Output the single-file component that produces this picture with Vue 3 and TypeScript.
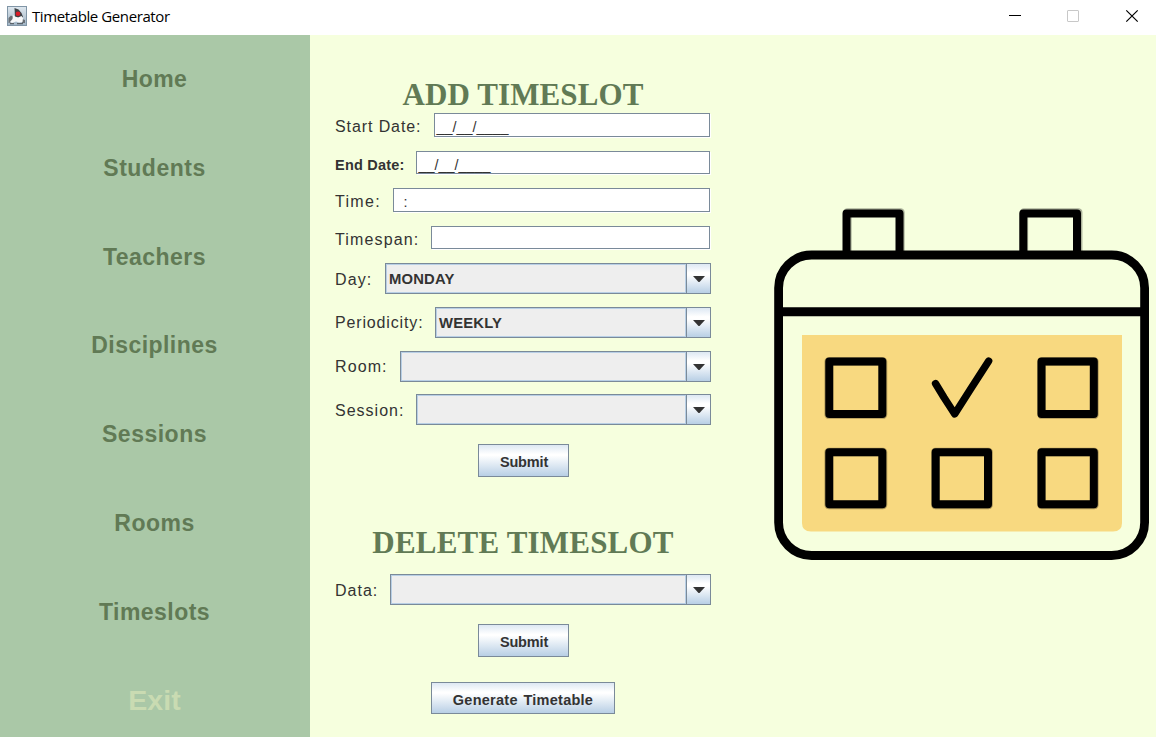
<script setup lang="ts">
interface NavItem { label: string; spacing: number; exit?: boolean }
interface Field {
  label: string
  labelWidth: number
  kind: 'text' | 'combo'
  value: string
  top: number
  height: number
  spacing: number
  bold?: boolean
  low?: boolean
  high?: boolean
}

const nav: NavItem[] = [
  { label: 'Home', spacing: 0.4 },
  { label: 'Students', spacing: 0.5 },
  { label: 'Teachers', spacing: 0.45 },
  { label: 'Disciplines', spacing: 0.45 },
  { label: 'Sessions', spacing: 0.5 },
  { label: 'Rooms', spacing: 0.5 },
  { label: 'Timeslots', spacing: 0.45 },
  { label: 'Exit', spacing: 0, exit: true },
]

const fields: Field[] = [
  { label: 'Start Date:', labelWidth: 99, kind: 'text', value: '__/__/____', top: 0, height: 24, spacing: 0.9 },
  { label: 'End Date:', labelWidth: 81, kind: 'text', value: '__/__/____', top: 14, height: 23, spacing: 0.22, bold: true, low: true },
  { label: 'Time:', labelWidth: 58, kind: 'text', value: '  :', top: 14, height: 24, spacing: 1.3 },
  { label: 'Timespan:', labelWidth: 96, kind: 'text', value: '', top: 14, height: 23, spacing: 1.15, low: true },
  { label: 'Day:', labelWidth: 50, kind: 'combo', value: 'MONDAY', top: 14, height: 31, spacing: 1.1 },
  { label: 'Periodicity:', labelWidth: 100, kind: 'combo', value: 'WEEKLY', top: 13, height: 31, spacing: 0.85, high: true },
  { label: 'Room:', labelWidth: 65, kind: 'combo', value: '', top: 13, height: 31, spacing: 1.1, high: true },
  { label: 'Session:', labelWidth: 81, kind: 'combo', value: '', top: 12, height: 31, spacing: 1 },
]

const deleteFields: Field[] = [
  { label: 'Data:', labelWidth: 55, kind: 'combo', value: '', top: 0, height: 31, spacing: 1 },
]

const groups = [
  { title: 'ADD TIMESLOT', cls: 'add', fields },
  { title: 'DELETE TIMESLOT', cls: 'delete', fields: deleteFields },
]
</script>

<template>
  <div class="window">
    <header class="titlebar">
      <svg class="app-icon" width="20" height="20" viewBox="0 0 20 20">
        <defs>
          <linearGradient id="tile" x1="0" y1="0" x2="0" y2="1">
            <stop offset="0" stop-color="#dfe8ef" />
            <stop offset="1" stop-color="#9fb3c4" />
          </linearGradient>
        </defs>
        <rect x=".5" y=".5" width="19" height="19" fill="url(#tile)" stroke="#8095a6" />
        <path d="M1.500 12 4 9.500 6.500 11 6 16 1.500 17Z" fill="#6a7076" />
        <path d="M15 13l3 1v3h-3Z" fill="#6a7076" />
        <path d="M7.500 2l4 1.500 3 3.500 1.500 4-2 1.500-6-1.500Z" fill="#3f4246" />
        <path d="M6 9l2 1.500 3 1 3.500-1.500 1.500 2-.5 4-3.500.5-3-1-4 1.500-2-1 2.500-3Z" fill="#f7f8f9" />
        <path d="M3 17h4v1.200H3ZM10 17h6v1.200h-6Z" fill="#5a6269" />
        <circle cx="11" cy="7.800" r="2.300" fill="#dc1c28" />
      </svg>
      <span class="title">Timetable Generator</span>
      <div class="controls">
        <svg width="176" height="35" viewBox="0 0 176 35" fill="none">
          <path d="M29 15.500H41" stroke="#000" />
          <rect x="87.500" y="10.500" width="11" height="11" rx=".5" stroke="#c8c8c8" />
          <path d="M146.300 10.300 157.700 21.700M157.700 10.300 146.300 21.700" stroke="#000" stroke-width="1.200" />
        </svg>
      </div>
    </header>

    <div class="body">
      <nav class="sidebar">
        <a v-for="n in nav" :key="n.label" class="nav-item" :class="{ exit: n.exit }">
          <span :style="{ letterSpacing: n.spacing + 'px' }">{{ n.label }}</span>
        </a>
      </nav>

      <main class="form">
        <section v-for="g in groups" :key="g.title" :class="g.cls">
          <h1>{{ g.title }}</h1>
          <div
            v-for="f in g.fields"
            :key="f.label"
            class="row"
            :style="{ marginTop: f.top + 'px', height: f.height + 'px' }"
          >
            <label
              :class="{ bold: f.bold, low: f.low, high: f.high }"
              :style="{ width: f.labelWidth + 'px', letterSpacing: f.spacing + 'px' }"
            >{{ f.label }}</label>
            <div v-if="f.kind === 'text'" class="input">{{ f.value }}</div>
            <div v-else class="combo">
              <div class="combo-value">{{ f.value }}</div>
              <div class="combo-arrow">
                <svg width="12" height="6" viewBox="0 0 12 6"><path d="M0 0H12L6.500 6H5.500Z" fill="#333" /></svg>
              </div>
            </div>
          </div>
          <button class="submit">Submit</button>
        </section>
        <button class="generate">Generate Timetable</button>
      </main>

      <aside class="art">
        <svg width="396" height="390" viewBox="760 190 396 390" fill="none" stroke="#000">
          <path d="M802 335H1122V523Q1122 531.500 1113 531.500H811Q802 531.500 802 523Z" fill="#f8d980" stroke="none" />
          <g stroke-width="8.300" stroke-linejoin="round" stroke-opacity=".3">
            <path d="M847.500 255V212.300H900.500V255" />
            <path d="M1024 255V212.300H1078.300V255" />
            <rect x="828.600" y="361.500" width="54.500" height="53.200" />
            <rect x="1041.500" y="361.500" width="53" height="53.200" />
            <rect x="828.600" y="452" width="54.500" height="53" />
            <rect x="935.200" y="452" width="53.500" height="53" />
            <rect x="1041.500" y="452" width="53" height="53" />
          </g>
          <rect x="778.600" y="255" width="366" height="300.500" rx="33" stroke-width="8.800" />
          <path d="M779 311.800H1145" stroke-width="9" />
          <g stroke-width="8" stroke-linejoin="round">
            <path d="M846.500 255V213.500H899.500V255" />
            <path d="M1023.300 255V213.500H1077V255" />
            <rect x="829.300" y="361.500" width="53" height="52.500" />
            <rect x="1041.500" y="361.500" width="52.300" height="52.500" />
            <rect x="829.300" y="452.300" width="53" height="52" />
            <rect x="935.700" y="452.300" width="52.300" height="52" />
            <rect x="1041.500" y="452.300" width="52.300" height="52" />
          </g>
          <path d="M935.500 383.500 944 397.500 954.700 414 970 390 988.700 361" stroke-width="7.300" stroke-linecap="round" stroke-linejoin="round" />
        </svg>
      </aside>
    </div>
  </div>
</template>

<style>
body { margin: 0; overflow: hidden; }
</style>

<style scoped>
.window {
  width: 1156px;
  height: 737px;
  display: flex;
  flex-direction: column;
  overflow: hidden;
  background: #f6ffde;
  font-family: "Liberation Sans", Arial, sans-serif;
  color: #333;
}
.titlebar {
  height: 35px;
  flex: none;
  display: flex;
  background: #fff;
}
.app-icon { margin: 6px 0 0 7px; }
.title {
  margin-left: 5px;
  font: 15px/33px "Open Sans", "Noto Sans", sans-serif;
  letter-spacing: -0.4px;
  color: #000;
}
.controls { margin-left: auto; }
.body { flex: 1; display: flex; min-height: 0; }
.sidebar {
  width: 310px;
  flex: none;
  box-sizing: border-box;
  padding: 0.35px 1px 0 0;
  background: #aac8a7;
  overflow: hidden;
}
.nav-item {
  height: 88.75px;
  display: flex;
  align-items: center;
  justify-content: center;
  font-size: 23px;
  font-weight: bold;
  color: #617a55;
}
.nav-item.exit { font-size: 28.500px; color: #c9dbb2; }
.form {
  width: 376px;
  flex: none;
  margin-left: 25px;
  display: flex;
  flex-direction: column;
}
section { display: flex; flex-direction: column; }
h1 {
  margin: 0;
  text-align: center;
  font: bold 31px/36px "Liberation Serif", "Times New Roman", serif;
  letter-spacing: 0.1px;
  color: #617a55;
}
.add h1 { margin-top: 42px; }
.delete h1 { margin-top: 48px; margin-bottom: 13px; letter-spacing: 0.2px; }
.row { display: flex; flex: none; }
label {
  flex: none;
  display: flex;
  align-items: center;
  font-size: 16px;
  white-space: nowrap;
  padding-top: 3px;
  box-sizing: border-box;
}
label.bold { font-size: 14.500px; font-weight: bold; }
label.low { padding-top: 5px; }
label.high { padding-top: 1px; }
.input {
  flex: 1;
  box-sizing: border-box;
  margin-right: 1px;
  border: 1px solid #7a8a99;
  background: #fff;
  box-shadow: 1px 1px 0 #fff;
  padding: 4px 0 0 1.500px;
  font-size: 14.400px;
  line-height: 18px;
  white-space: pre;
}
.combo {
  flex: 1;
  display: flex;
  box-sizing: border-box;
  border: 1px solid #7a8a99;
}
.combo-value {
  flex: 1;
  border: 1px solid #b8cfe5;
  background: #eee;
  padding: 2px 0 0 2px;
  font-size: 14.800px;
  font-weight: bold;
  line-height: 25px;
  letter-spacing: 0.2px;
}
.combo-arrow {
  width: 23px;
  flex: none;
  border-left: 1px solid #7a8a99;
  display: flex;
  align-items: center;
  justify-content: center;
  background: linear-gradient(#dde8f3, #fff 30%, #fff 38%, #b8cfe5);
}
button {
  align-self: center;
  box-sizing: border-box;
  border: 1px solid #7a8a99;
  border-radius: 0;
  padding: 3px 0 0;
  font: bold 14.500px "Liberation Sans", Arial, sans-serif;
  color: #333;
  background: linear-gradient(#dde8f3, #fff 30%, #fff 34%, #b8cfe5);
}
.submit { width: 91px; height: 33px; margin-top: 19px; padding-left: 2px; letter-spacing: -0.15px; }
.generate { width: 184px; height: 32px; margin-top: 25px; letter-spacing: 0.25px; word-spacing: 1.500px; }
.art { margin-left: 49px; margin-top: 155px; }
</style>
